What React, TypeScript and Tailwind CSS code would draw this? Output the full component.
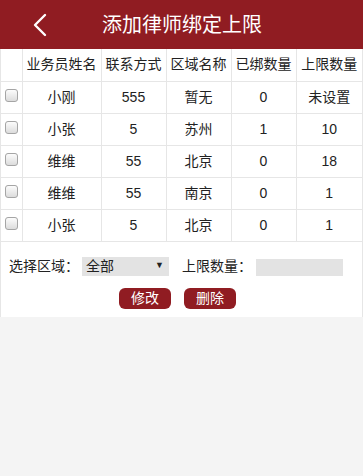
import React from 'react';

const rows = [
  { name: '小刚', phone: '555', area: '暂无', bound: '0', limit: '未设置' },
  { name: '小张', phone: '5', area: '苏州', bound: '1', limit: '10' },
  { name: '维维', phone: '55', area: '北京', bound: '0', limit: '18' },
  { name: '维维', phone: '55', area: '南京', bound: '0', limit: '1' },
  { name: '小张', phone: '5', area: '北京', bound: '0', limit: '1' },
];

const font = { fontFamily: '"Liberation Sans", "Noto Sans CJK SC", sans-serif' };

export default function App() {
  return (
    <div className="w-[363px] h-[476px] bg-[#f4f4f4] text-[#222]" style={font}>
      <div className="h-[49px] bg-[#901c22] flex items-center relative">
        <svg
          className="absolute left-[32px] top-[13px]"
          width="15"
          height="24"
          viewBox="0 0 15 24"
          fill="none"
        >
          <path d="M13 2 L3 12 L13 22" stroke="white" strokeWidth="2.4" strokeLinecap="round" strokeLinejoin="round" />
        </svg>
        <h1 className="w-full text-center text-[20px] text-white leading-none pl-[1px]">添加律师绑定上限</h1>
      </div>

      <div className="bg-white border-x border-[#e6e6e6] pb-[8px]">
        <table className="w-full border-collapse text-[14px] text-center table-fixed">
          <colgroup>
            <col className="w-[21px]" />
            <col className="w-[79px]" />
            <col className="w-[65px]" />
            <col className="w-[65px]" />
            <col className="w-[65px]" />
            <col />
          </colgroup>
          <thead>
            <tr className="h-[32px]">
              <th className="border border-[#e6e6e6] border-t-0 border-l-0 font-normal"></th>
              <th className="border border-[#e6e6e6] border-t-0 font-normal px-0 whitespace-nowrap">业务员姓名</th>
              <th className="border border-[#e6e6e6] border-t-0 font-normal whitespace-nowrap">联系方式</th>
              <th className="border border-[#e6e6e6] border-t-0 font-normal whitespace-nowrap">区域名称</th>
              <th className="border border-[#e6e6e6] border-t-0 font-normal whitespace-nowrap">已绑数量</th>
              <th className="border border-[#e6e6e6] border-t-0 border-r-0 font-normal whitespace-nowrap">上限数量</th>
            </tr>
          </thead>
          <tbody>
            {rows.map((r, i) => (
              <tr key={i} className="h-[32px]">
                <td className="border border-[#e6e6e6] border-l-0 p-0">
                  <div className="flex justify-center -mt-[3px]">
                    <span className="block w-[13px] h-[13px] rounded-[3px] border border-[#a5a5a5] bg-gradient-to-b from-[#fcfcfc] to-[#dcdcdc]"></span>
                  </div>
                </td>
                <td className="border border-[#e6e6e6]">{r.name}</td>
                <td className="border border-[#e6e6e6]">{r.phone}</td>
                <td className="border border-[#e6e6e6]">{r.area}</td>
                <td className="border border-[#e6e6e6]">{r.bound}</td>
                <td className="border border-[#e6e6e6] border-r-0">{r.limit}</td>
              </tr>
            ))}
          </tbody>
        </table>

        <div className="flex items-center text-[14px] mt-[14px] pl-[8px]">
          <span>选择区域：</span>
          <div className="ml-[3px] w-[87px] h-[19px] bg-[#e3e3e3] flex items-center justify-between pl-[4px] pr-[5px]">
            <span>全部</span>
            <span className="text-[9px]">▼</span>
          </div>
          <span className="ml-[13px]">上限数量：</span>
          <div className="ml-[4px] w-[87px] h-[17px] bg-[#e3e3e3] mt-[2px]"></div>
        </div>

        <div className="flex justify-center gap-[13px] mt-[11px] pr-[8px]">
          <button className="w-[52px] h-[21px] rounded-[6px] bg-[#901c22] text-white text-[14px] leading-none">修改</button>
          <button className="w-[52px] h-[21px] rounded-[6px] bg-[#901c22] text-white text-[14px] leading-none">删除</button>
        </div>
      </div>
    </div>
  );
}
